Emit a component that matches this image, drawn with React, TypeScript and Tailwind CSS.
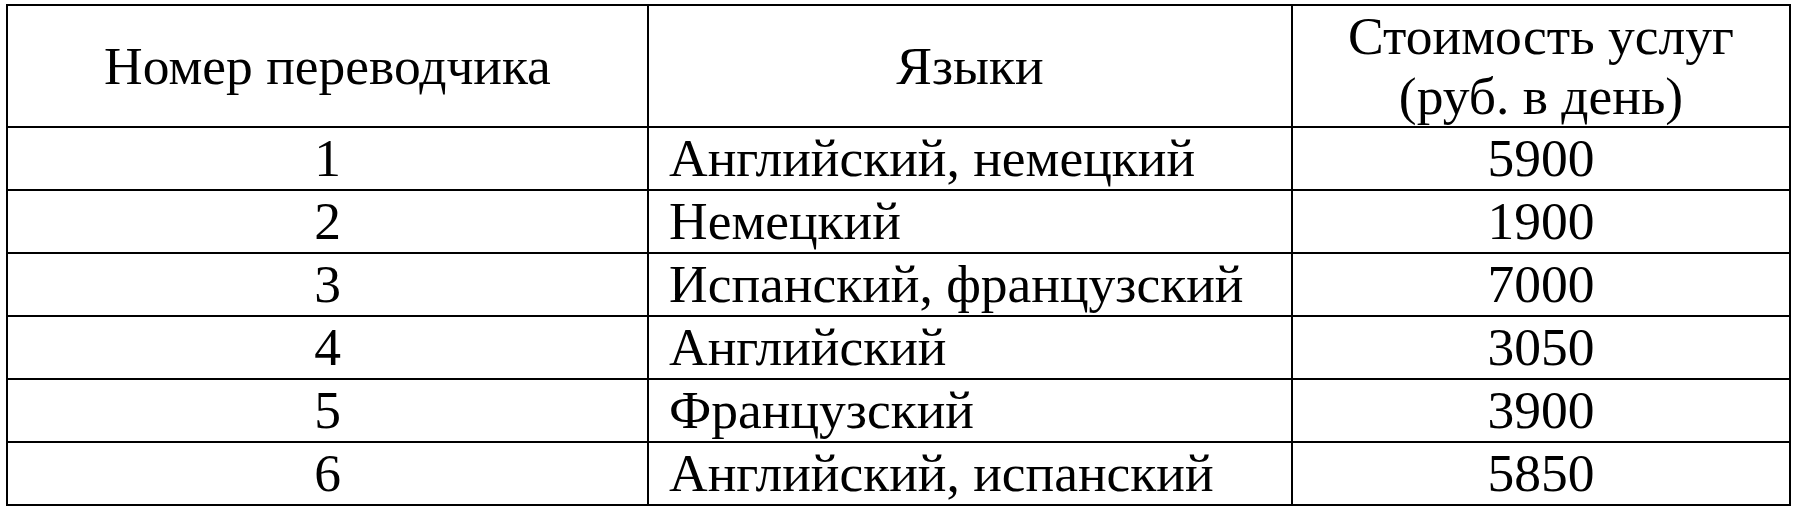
const rows = [
  { id: 1, langs: 'Английский, немецкий', price: 5900 },
  { id: 2, langs: 'Немецкий', price: 1900 },
  { id: 3, langs: 'Испанский, французский', price: 7000 },
  { id: 4, langs: 'Английский', price: 3050 },
  { id: 5, langs: 'Французский', price: 3900 },
  { id: 6, langs: 'Английский, испанский', price: 5850 },
];

export default function App() {
  return (
    <div className="min-h-screen bg-white pt-[4px] pl-[6px] text-black">
      <table
        className="w-[1783px] table-fixed border-collapse border-2 border-black text-[53.5px] leading-[61px]"
        style={{ fontFamily: '"Liberation Serif", "Times New Roman", serif' }}
      >
        <colgroup>
          <col className="w-[641px]" />
          <col className="w-[644px]" />
          <col className="w-[498px]" />
        </colgroup>
        <thead>
          <tr>
            <th className="border-2 border-black p-0 text-center font-normal">Номер переводчика</th>
            <th className="border-2 border-black p-0 text-center font-normal">Языки</th>
            <th className="border-2 border-black p-0 text-center font-normal leading-[60px]">
              Стоимость услуг
              <br />
              (руб. в день)
            </th>
          </tr>
        </thead>
        <tbody>
          {rows.map((row) => (
            <tr key={row.id}>
              <td className="border-2 border-black p-0 text-center">{row.id}</td>
              <td className="border-2 border-black py-0 pl-[20px] pr-0 text-left">{row.langs}</td>
              <td className="border-2 border-black p-0 text-center">{row.price}</td>
            </tr>
          ))}
        </tbody>
      </table>
    </div>
  );
}
